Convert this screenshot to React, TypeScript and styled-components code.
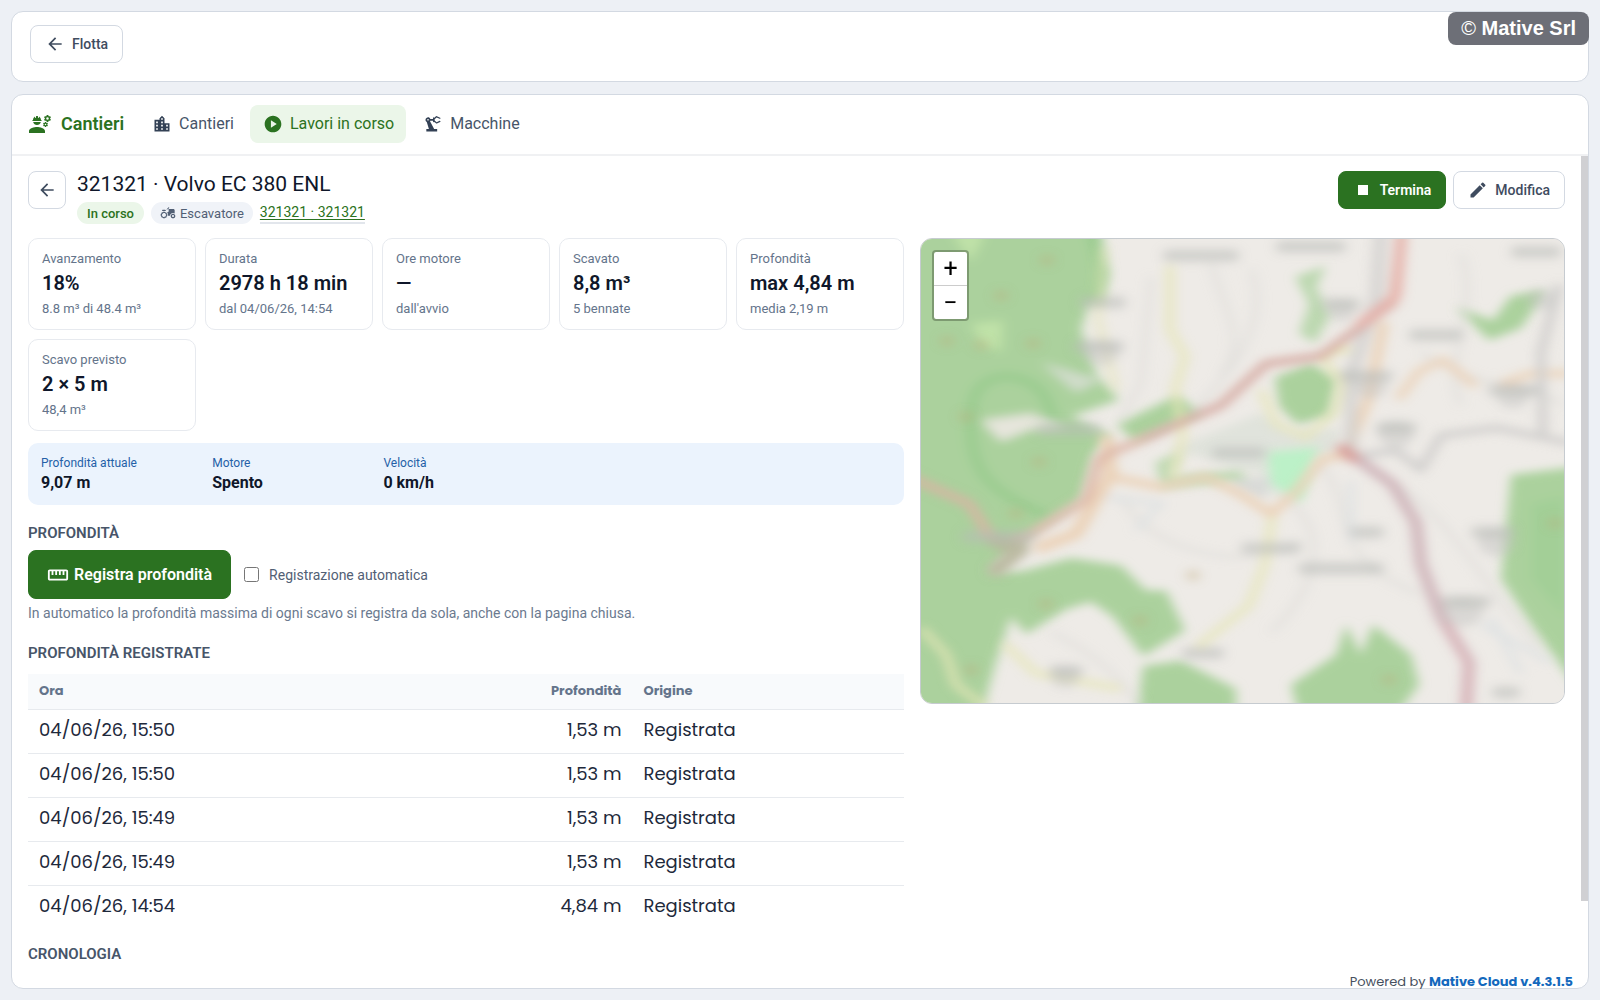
import React from "react";
import styled, { createGlobalStyle, css } from "styled-components";
import {
  MdAgriculture,
  MdArrowBack,
  MdEdit,
  MdEngineering,
  MdLocationCity,
  MdPlayCircle,
  MdPrecisionManufacturing,
  MdStop,
  MdStraighten,
} from "react-icons/md";

const GlobalStyle = createGlobalStyle`
  *, *::before, *::after { box-sizing: border-box; }
  html, body, #root { height: 100%; }
  body {
    margin: 0;
    background: #edf0f5;
    color: #0f172a;
    font-family: Roboto, "Liberation Sans", sans-serif;
    font-size: 14px;
  }
  h1, h2, p, dl, dd { margin: 0; }
  button { font-family: inherit; cursor: pointer; }
`;

const geometric = `Poppins, Inter, sans-serif`;

const Page = styled.div`
  display: flex;
  flex-direction: column;
  gap: 12px;
  height: 100%;
  min-height: 600px;
  padding: 11px;
`;

const panel = css`
  background: #fff;
  border: 1px solid #d3d9e2;
  border-radius: 12px;
`;

const TopPanel = styled.header`
  ${panel}
  position: relative;
  flex: none;
  padding: 13px 18px 18px;
`;

const Watermark = styled.div`
  position: absolute;
  top: 0;
  right: -1px;
  padding: 4px 13px;
  border-radius: 8px;
  background: #6d6f77;
  color: #fff;
  font: bold 20px/25px "Liberation Sans", Arial, sans-serif;

  span { font-weight: 400; }
`;

const Button = styled.button<{ $solid?: boolean; $large?: boolean; $square?: boolean }>`
  display: inline-flex;
  align-items: center;
  justify-content: center;
  gap: ${(p) => (p.$large ? 5 : 7)}px;
  height: ${(p) => (p.$large ? 49 : 38)}px;
  width: ${(p) => (p.$square ? "38px" : "auto")};
  padding: 0 ${(p) => (p.$square ? 0 : p.$large ? 18 : 14)}px;
  border: 1px solid ${(p) => (p.$solid ? "#2b7221" : "#d3d9e2")};
  border-radius: 8px;
  background: ${(p) => (p.$solid ? "#2b7221" : "#fff")};
  color: ${(p) => (p.$solid ? "#fff" : "#3f4c5f")};
  font-size: ${(p) => (p.$large ? 16 : 14)}px;
  font-weight: ${(p) => (p.$solid ? 600 : 500)};
  white-space: nowrap;
`;

const MainPanel = styled.main`
  ${panel}
  display: flex;
  flex: 1;
  flex-direction: column;
  min-height: 0;
  overflow: hidden;
`;

const Nav = styled.nav`
  display: flex;
  flex: none;
  align-items: center;
  gap: 4px;
  height: 61px;
  padding: 0 16px 2px;
  border-bottom: 2px solid #f0f1f3;
`;

const Brand = styled.div`
  display: flex;
  align-items: center;
  gap: 9px;
  margin-right: 11px;
  color: #2b7221;
  font-size: 18px;
  font-weight: 600;
`;

const NavLink = styled.a<{ $active?: boolean }>`
  display: flex;
  align-items: center;
  gap: 7px;
  height: 38px;
  padding: 0 12px 0 13px;
  border-radius: 8px;
  background: ${(p) => (p.$active ? "#ebf6e9" : "transparent")};
  color: ${(p) => (p.$active ? "#2b7221" : "#475569")};
  font-size: 16px;
  text-decoration: none;

  svg { color: ${(p) => (p.$active ? "#2b7221" : "#334155")}; }
`;

const Body = styled.div`
  display: flex;
  flex: 1;
  min-height: 0;
`;

const Content = styled.div`
  flex: 1;
  min-width: 0;
  overflow: hidden;
  padding: 15px 16px 0;
`;

const ScrollRail = styled.div`
  flex: none;
  width: 7px;
`;

const ScrollThumb = styled.div`
  height: 89.6%;
  background: #d0d0d3;
`;

const TitleRow = styled.div`
  display: flex;
  align-items: flex-start;
  gap: 11px;
  margin-bottom: 14px;
`;

const TitleBlock = styled.div`
  flex: 1;
`;

const Title = styled.h1`
  font-size: 21px;
  font-weight: 400;
  line-height: 26px;
`;

const Tags = styled.div`
  display: flex;
  align-items: center;
  gap: 7px;
  margin-top: 5px;
`;

const Tag = styled.span<{ $green?: boolean }>`
  display: inline-flex;
  align-items: center;
  gap: 4px;
  height: 22px;
  padding: 0 ${(p) => (p.$green ? 10 : 9)}px;
  border-radius: 11px;
  background: ${(p) => (p.$green ? "#ebf6e9" : "#f0f3f8")};
  color: ${(p) => (p.$green ? "#2b7221" : "#526075")};
  font-size: 13px;
  font-weight: ${(p) => (p.$green ? 500 : 400)};
`;

const SiteLink = styled.a`
  height: 22px;
  border-bottom: 2px solid #e2e6ec;
  color: #2b7221;
  font-size: 14px;
  line-height: 20px;
  text-underline-offset: 2px;
`;

const Actions = styled.div`
  display: flex;
  gap: 7px;
`;

const Columns = styled.div`
  display: grid;
  grid-template-columns: minmax(0, 876fr) minmax(0, 645fr);
  gap: 16px;
  align-items: start;
`;

const Cards = styled.div`
  display: grid;
  grid-template-columns: repeat(auto-fill, minmax(150px, 1fr));
  gap: 9px;
`;

const Card = styled.section`
  height: 92px;
  padding: 11px 13px;
  border: 1px solid #e7eaef;
  border-radius: 10px;
`;

const Small = styled.p`
  color: #64748b;
  font-size: 13px;
  line-height: 18px;
`;

const Big = styled.p`
  padding: 5px 0 7px;
  font-size: 20px;
  font-weight: 600;
  line-height: 20px;
`;

const Live = styled.dl`
  display: grid;
  grid-template-columns: repeat(5, 1fr);
  column-gap: 6px;
  height: 62px;
  margin-top: 12px;
  padding: 10px 13px;
  border-radius: 10px;
  background: #ebf3fd;

  dt {
    color: #2460a7;
    font-size: 12px;
    line-height: 20px;
  }
  dd {
    font-size: 16px;
    font-weight: 700;
    line-height: 20px;
  }
`;

const Heading = styled.h2<{ $above: number; $below?: number }>`
  margin: ${(p) => p.$above}px 0 ${(p) => p.$below ?? 8}px;
  color: #475569;
  font-size: 15px;
  font-weight: 600;
  line-height: 18px;
  text-transform: uppercase;
`;

const RecordRow = styled.div`
  display: flex;
  align-items: center;
  gap: 13px;
`;

const CheckLabel = styled.label`
  display: flex;
  align-items: center;
  gap: 10px;
  color: #526075;
  font-size: 14px;

  input {
    width: 15px;
    height: 15px;
    margin: 0;
  }
`;

const Hint = styled.p`
  margin-top: 5px;
  color: #6b7a8f;
  font-size: 14px;
  line-height: 18px;
`;

const Table = styled.table`
  width: 100%;
  border-collapse: collapse;
  font-family: ${geometric};

  th, td {
    padding: 0 11px;
    border-bottom: 1px solid #e7eaee;
    text-align: left;
    white-space: nowrap;
  }
  th {
    height: 35px;
    background: #f8fafc;
    color: #64748b;
    font-size: 13px;
    font-weight: 700;
  }
  td {
    height: 44px;
    padding-bottom: 3px;
    color: #1e293b;
    font-size: 18px;
  }
  tbody tr:last-child td { border-bottom: 0; }
  th:nth-child(1) { width: 48%; }
  th:nth-child(2), td:nth-child(2) { text-align: right; }
  th:nth-child(3) { width: 31%; }
`;

const MapFrame = styled.div`
  position: relative;
  height: 466px;
  border: 1px solid #c6cbd0;
  border-radius: 12px;
  overflow: hidden;
  background: #eeebe7;
`;

const MapDrawing = styled.svg`
  display: block;
  width: 100%;
  height: 100%;
`;

const Zoom = styled.div`
  position: absolute;
  top: 11px;
  left: 11px;
  display: flex;
  flex-direction: column;
  width: 37px;
  border: 2px solid rgba(80, 100, 70, 0.5);
  border-radius: 4px;
  background: #fff;
  background-clip: padding-box;
`;

const ZoomButton = styled.button`
  display: grid;
  place-items: center;
  height: 33px;
  padding: 0;
  border: 0;
  background: transparent;
  color: #000;
  font: 400 25px/32px Roboto, sans-serif;

  & + & {
    height: 34px;
    border-top: 1px solid #ccc;
  }
`;

const Footer = styled.footer`
  position: absolute;
  right: 27px;
  bottom: 9px;
  color: #475060;
  font: 13px/18px ${geometric};

  a {
    color: #1469bd;
    font-weight: 700;
    text-decoration: none;
  }
`;

const cards = [
  ["Avanzamento", "18%", "8.8 m³ di 48.4 m³"],
  ["Durata", "2978 h 18 min", "dal 04/06/26, 14:54"],
  ["Ore motore", "—", "dall'avvio"],
  ["Scavato", "8,8 m³", "5 bennate"],
  ["Profondità", "max 4,84 m", "media 2,19 m"],
  ["Scavo previsto", "2 × 5 m", "48,4 m³"],
];

const live = [
  ["Profondità attuale", "9,07 m"],
  ["Motore", "Spento"],
  ["Velocità", "0 km/h"],
];

const records = [
  ["04/06/26, 15:50", "1,53 m"],
  ["04/06/26, 15:50", "1,53 m"],
  ["04/06/26, 15:49", "1,53 m"],
  ["04/06/26, 15:49", "1,53 m"],
  ["04/06/26, 14:54", "4,84 m"],
];

const placeMarks = [
  [280, 22, 76], [390, 10, 70], [615, 17, 50], [182, 84, 46], [178, 142, 50],
  [420, 86, 38], [515, 127, 54], [445, 181, 54], [148, 252, 64],
  [318, 283, 54], [475, 250, 40], [592, 200, 50], [78, 394, 74],
  [446, 388, 34], [350, 409, 60], [420, 436, 86], [572, 388, 44],
  [545, 480, 50], [282, 548, 42], [145, 572, 34], [585, 600, 28],
];

const towns = [
  [180, 150, 18], [592, 208, 16], [475, 258, 18], [575, 402, 18], [542, 493, 20],
  [144, 580, 14], [450, 195, 16], [620, 80, 14], [420, 95, 14],
];

const trails = [
  "M290 30 C300 90 330 130 300 180", "M330 40 C350 110 310 180 270 230",
  "M230 50 L220 190 L200 240", "M540 20 C560 90 520 160 540 220",
  "M500 150 C570 210 600 180 640 220", "M330 320 C420 360 400 460 350 520",
  "M470 320 C540 380 560 460 620 540", "M200 340 C230 420 330 440 380 400",
  "M400 300 C440 360 400 420 500 470", "M130 520 C190 560 200 590 220 615",
];

const summits = [
  [126, 28], [80, 75], [26, 135], [60, 140], [112, 138], [45, 235],
  [118, 295], [272, 445], [125, 483], [219, 505], [468, 583], [95, 363], [50, 570], [634, 376],
];

function AreaMap() {
  return (
    <MapDrawing viewBox="0 0 643 614" preserveAspectRatio="none" aria-hidden="true">
      <defs>
        <filter id="land" x="-10%" y="-10%" width="120%" height="120%">
          <feGaussianBlur stdDeviation="6" />
        </filter>
        <filter id="detail" x="-10%" y="-10%" width="120%" height="120%">
          <feGaussianBlur stdDeviation="6" />
        </filter>
      </defs>
      <rect width="643" height="614" fill="#eeebe7" />
      <g filter="url(#land)">
        <g fill="#abd19d">
          <path d="M-20 -20H180L186 45L168 88L160 120L176 180L190 200L198 213L150 235L190 260L172 285L160 345L100 400L68 440L100 440L150 422L200 432L225 465L245 465L264 518L222 552L192 500L170 480L145 490L105 523L90 500L75 560L58 640H-20Z" />
          <path d="M196 245L256 207L280 230L213 268Z" />
          <path d="M354 183L390 164L417 185L408 235L376 245L358 222Z" />
          <path d="M374 50L405 35L395 65L410 100L394 138L378 125L388 86Z" opacity=".75" />
          <path d="M535 90L572 108L590 75L625 68L600 118L568 134Z" />
          <path d="M222 565L260 558L315 595L315 640H215Z" />
          <path d="M370 590L415 550L425 510L440 550L452 510L490 550L498 590L470 640H380Z" />
          <path d="M590 312L665 300V610L615 520L580 450Z" />
          <path d="M234 295L262 280L250 315L318 305L330 320L240 329Z" opacity=".7" />
        </g>
        <g fill="#c0e2a8">
          <path d="M30 -10H65L50 30Z" />
          <path d="M50 112L82 108L80 150L60 138Z" />
        </g>
        <g stroke="#9bcc91" fill="none" strokeWidth="12">
          <path d="M170 -10L182 45L175 85" />
          <path d="M132 245C130 215 120 185 85 182C55 185 50 210 50 240C48 310 70 335 125 365" />
        </g>
        <path d="M610 350L643 340V500L610 450Z" fill="#99cb90" opacity=".45" />
        <path d="M60 240L110 231L145 249L110 252L80 268Z" fill="#e6e5dc" />
        <path d="M120 163L180 187L155 203Z" fill="#d0dcca" />
        <path d="M340 230L370 255L420 250L418 280L350 315L310 300L250 278Z" fill="#e0e3dc" />
        <path d="M346 282L398 275L380 350L350 328Z" fill="#bcf1c8" />
        <path d="M310 320L350 315L345 345L315 330Z" fill="#d8dad8" />
      </g>
      <g filter="url(#detail)">
        <g fill="none" stroke="#dcdad7" strokeWidth="6" opacity=".6">
          {trails.map((d) => <path key={d} d={d} />)}
        </g>
        <g fill="none" stroke="#dbe0e2" strokeWidth="5">
          <path d="M170 340L240 350L215 385" />
          <path d="M430 320L430 400M570 500L600 575M560 510L630 560" />
        </g>
        <g fill="none" stroke="#e7e7b8" strokeWidth="9" strokeLinejoin="round" opacity=".8">
          <path d="M249 35V120L264 155L254 200L262 260L252 315" />
          <path d="M183 10L177 105L195 200" opacity=".7" />
          <path d="M352 360L344 430L328 485L276 540" />
          <path d="M340 200L355 245L385 262L414 228L420 190L400 155L430 145" />
          <path d="M0 515L25 550L35 590L65 620M83 535L115 575L200 595" />
        </g>
        <g fill="none" stroke="#ebd2b8" strokeWidth="10" strokeLinejoin="round">
          <path d="M190 315L240 328L285 315L320 338L350 364L375 335L400 292L425 285L447 213L463 110" />
          <path d="M477 212L498 175L522 160L555 195M580 192L610 178H650" opacity=".85" />
          <path d="M185 260L190 310L155 390L115 410" strokeWidth="14" />
        </g>
        <g fill="none" stroke="#d0cfcd" strokeLinejoin="round">
          <path d="M460 -10L455 80L430 180L430 285" strokeWidth="14" opacity=".75" />
          <path d="M430 288L475 280L500 305L520 260L575 250L650 270" strokeWidth="9" />
          <path d="M638 60L620 150L622 260" strokeWidth="9" />
        </g>
        <g fill="none" strokeLinejoin="round" strokeLinecap="round" opacity=".9">
          <path d="M482 -20L472 85L400 155L345 165L300 220L225 263L178 290L165 345L110 390L75 405L48 350L-20 310" stroke="#dcb3a5" strokeWidth="10" />
          <path d="M472 85L400 155L345 165L300 220L225 263" stroke="#d2a29c" strokeWidth="7" />
          <path d="M75 400L100 410L75 438" stroke="#b8b69d" strokeWidth="18" />
          <path d="M430 285L472 325L495 375L500 430L520 500L548 560L545 630" stroke="#cdb0b6" strokeWidth="12" />
          <path d="M525 510L548 565L545 630" stroke="#d8adb4" strokeWidth="8" />
          <path d="M422 278L432 289" stroke="#d79d99" strokeWidth="15" />
          <path d="M480 0L475 75L440 112" stroke="#e6aca5" strokeWidth="11" />
        </g>
        <g fill="#b8bab6" opacity=".55">
          {placeMarks.map(([x, y, w], i) => (
            <rect key={i} x={x - w / 2} y={y - 8} width={w} height="16" rx="6" />
          ))}
        </g>
        <g fill="#c0c1be" opacity=".45">
          {towns.map(([x, y, r], i) => <circle key={i} cx={x} cy={y} r={r} />)}
        </g>
        <g fill="#bda878" opacity=".4">
          {summits.map(([x, y], i) => <circle key={i} cx={x} cy={y} r="7" />)}
        </g>
      </g>
    </MapDrawing>
  );
}

export default function App() {
  return (
    <>
      <GlobalStyle />
      <Page>
        <TopPanel>
          <Button type="button"><MdArrowBack size={20} />Flotta</Button>
          <Watermark><span>©</span> Mative Srl</Watermark>
        </TopPanel>
        <MainPanel>
          <Nav>
            <Brand><MdEngineering size={24} />Cantieri</Brand>
            <NavLink href="#cantieri"><MdLocationCity size={20} />Cantieri</NavLink>
            <NavLink href="#lavori" $active aria-current="page"><MdPlayCircle size={20} />Lavori in corso</NavLink>
            <NavLink href="#macchine"><MdPrecisionManufacturing size={20} />Macchine</NavLink>
          </Nav>
          <Body>
            <Content>
              <TitleRow>
                <Button type="button" $square aria-label="Indietro"><MdArrowBack size={20} /></Button>
                <TitleBlock>
                  <Title>321321 · Volvo EC 380 ENL</Title>
                  <Tags>
                    <Tag $green>In corso</Tag>
                    <Tag><MdAgriculture size={16} />Escavatore</Tag>
                    <SiteLink href="#321321">321321 · 321321</SiteLink>
                  </Tags>
                </TitleBlock>
                <Actions>
                  <Button type="button" $solid><MdStop size={20} />Termina</Button>
                  <Button type="button"><MdEdit size={20} />Modifica</Button>
                </Actions>
              </TitleRow>
              <Columns>
                <div>
                  <Cards>
                    {cards.map(([label, value, note]) => (
                      <Card key={label}>
                        <Small>{label}</Small>
                        <Big>{value}</Big>
                        <Small>{note}</Small>
                      </Card>
                    ))}
                  </Cards>
                  <Live>
                    {live.map(([label, value]) => (
                      <div key={label}>
                        <dt>{label}</dt>
                        <dd>{value}</dd>
                      </div>
                    ))}
                  </Live>
                  <Heading $above={19}>Profondità</Heading>
                  <RecordRow>
                    <Button type="button" $solid $large><MdStraighten size={22} />Registra profondità</Button>
                    <CheckLabel><input type="checkbox" />Registrazione automatica</CheckLabel>
                  </RecordRow>
                  <Hint>In automatico la profondità massima di ogni scavo si registra da sola, anche con la pagina chiusa.</Hint>
                  <Heading $above={22} $below={12}>Profondità registrate</Heading>
                  <Table>
                    <thead>
                      <tr><th scope="col">Ora</th><th scope="col">Profondità</th><th scope="col">Origine</th></tr>
                    </thead>
                    <tbody>
                      {records.map(([time, depth], i) => (
                        <tr key={i}><td>{time}</td><td>{depth}</td><td>Registrata</td></tr>
                      ))}
                    </tbody>
                  </Table>
                  <Heading $above={16}>Cronologia</Heading>
                </div>
                <MapFrame>
                  <AreaMap />
                  <Zoom>
                    <ZoomButton type="button" aria-label="Ingrandisci">+</ZoomButton>
                    <ZoomButton type="button" aria-label="Riduci">−</ZoomButton>
                  </Zoom>
                </MapFrame>
              </Columns>
            </Content>
            <ScrollRail><ScrollThumb /></ScrollRail>
          </Body>
        </MainPanel>
      </Page>
      <Footer>Powered by <a href="#mative">Mative Cloud v.4.3.1.5</a></Footer>
    </>
  );
}
